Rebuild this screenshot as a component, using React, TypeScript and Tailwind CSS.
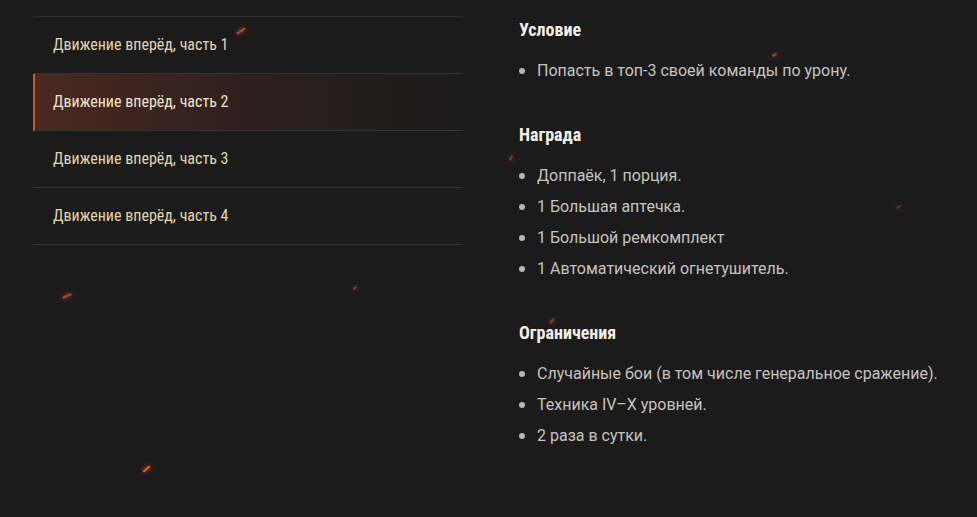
import React from 'react';

const parts = ['Движение вперёд, часть 1', 'Движение вперёд, часть 2', 'Движение вперёд, часть 3', 'Движение вперёд, часть 4'];

const sections = [
  { title: 'Условие', items: ['Попасть в топ-3 своей команды по урону.'] },
  {
    title: 'Награда',
    items: ['Доппаёк, 1 порция.', '1 Большая аптечка.', '1 Большой ремкомплект', '1 Автоматический огнетушитель.'],
  },
  {
    title: 'Ограничения',
    items: ['Случайные бои (в том числе генеральное сражение).', 'Техника IV–X уровней.', '2 раза в сутки.'],
  },
];

const sparks = [
  { x: 236, y: 30, w: 10, r: -35, o: 0.8 },
  { x: 62, y: 295, w: 10, r: -25, o: 0.7 },
  { x: 142, y: 468, w: 9, r: -40, o: 1 },
  { x: 353, y: 287, w: 4, r: -30, o: 0.6 },
  { x: 772, y: 54, w: 5, r: -30, o: 0.7 },
  { x: 508, y: 157, w: 6, r: -60, o: 0.5 },
  { x: 896, y: 206, w: 5, r: -40, o: 0.4 },
  { x: 549, y: 320, w: 6, r: -50, o: 0.6 },
];

const condensed = { fontFamily: '"Roboto Condensed", "Liberation Sans Narrow", "DejaVu Sans Condensed", sans-serif' };

export default function App() {
  return (
    <div className="relative h-[517px] w-[977px] overflow-hidden bg-[#1c1b1c]" style={{ fontFamily: 'Roboto, sans-serif' }}>
      <div className="flex gap-[56px] pl-[33px] pt-[16px]">
        <div className="w-[430px] border-t border-[#323132]">
          {parts.map((p, i) => (
            <div
              key={p}
              className={`flex h-[57px] items-center border-b border-[#363536] text-[16px] font-normal ${
                i === 1
                  ? 'border-l-2 border-l-[#c9582f] bg-gradient-to-r from-[#4b2922] via-[#2d1f1d] to-[#1c1b1c] pl-[18px] text-[#f1e3cc]'
                  : 'pl-[20px] text-[#e2d4a9]'
              }`}
              style={condensed}
            >
              {p}
            </div>
          ))}
        </div>
        <div className="pt-[3px]">
          {sections.map((s) => (
            <div key={s.title} className="mb-[38px]">
              <h3 className="text-[18px] font-bold leading-[22px] text-[#f5f0e6]" style={condensed}>
                {s.title}
              </h3>
              <ul className="mt-[14px] flex flex-col">
                {s.items.map((t) => (
                  <li key={t} className="flex h-[31px] items-center text-[16px] text-[#c7c3bc]">
                    <span className="mr-[12px] size-[6px] shrink-0 rounded-full bg-[#b9b6b0]" />
                    {t}
                  </li>
                ))}
              </ul>
            </div>
          ))}
        </div>
      </div>
      {sparks.map((s, i) => (
        <span
          key={i}
          className="pointer-events-none absolute h-[2px] rounded-full bg-[#e0602a] shadow-[0_0_4px_#ff6a2a]"
          style={{ left: s.x, top: s.y, width: s.w, transform: `rotate(${s.r}deg)`, opacity: s.o }}
        />
      ))}
    </div>
  );
}
